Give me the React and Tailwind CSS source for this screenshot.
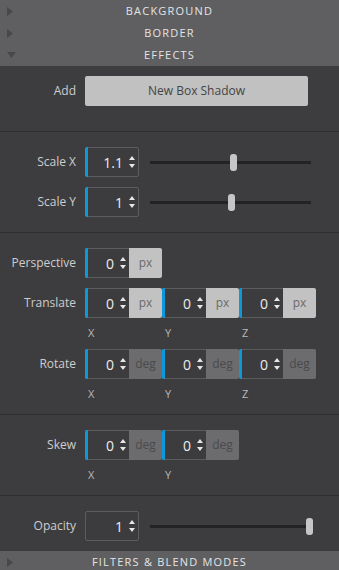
import React from 'react';

const font = { fontFamily: '"Open Sans", "Liberation Sans", sans-serif' };

function Header({ title, open }) {
  return (
    <div className="relative shrink-0 h-[22px] bg-[#5f5f61] flex items-center justify-center">
      <div className="absolute left-[7px] top-0 h-full flex items-center">
        {open ? (
          <svg width="9" height="6" viewBox="0 0 9 6"><path d="M0 0 L9 0 L4.5 6 Z" fill="#48484a" /></svg>
        ) : (
          <svg width="6" height="9" viewBox="0 0 6 9"><path d="M0 0 L6 4.5 L0 9 Z" fill="#48484a" /></svg>
        )}
      </div>
      <span className="text-[11px] tracking-[1.2px] text-[#e4e4e4] uppercase">{title}</span>
    </div>
  );
}

function Spin() {
  return (
    <div className="flex flex-col items-center gap-[4px]">
      <svg width="6" height="4" viewBox="0 0 6 4"><path d="M0 4 L3 0 L6 4 Z" fill="#e6e6e6" /></svg>
      <svg width="6" height="4" viewBox="0 0 6 4"><path d="M0 0 L6 0 L3 4 Z" fill="#e6e6e6" /></svg>
    </div>
  );
}

function NumBox({ value, w, bar = true, unit }) {
  return (
    <div className={`h-[30px] ${w} shrink-0 relative flex items-center justify-end pr-[3px] border border-[#5c5c5e] ${unit ? 'rounded-l-[2px] border-r-0' : 'rounded-[2px]'} bg-[#3c3c3e]`}>
      {bar && <div className="absolute left-[-1px] top-[-1px] bottom-[-1px] w-[3px] bg-[#0d98dc] rounded-l-[2px]" />}
      <span className="text-[14px] text-[#ececec] mr-[6px]">{value}</span>
      <Spin />
    </div>
  );
}

function Unit({ text, dark }) {
  return (
    <div className={`h-[30px] w-[33px] shrink-0 flex items-center justify-center text-[12px] rounded-r-[2px] ${dark ? 'bg-[#6c6c6e] text-[#4a4a4c]' : 'bg-[#c2c2c2] text-[#6a6a6a]'}`}>
      {text}
    </div>
  );
}

function Group({ unit, dark }) {
  return (
    <div className="flex shrink-0">
      <NumBox value="0" w="w-[44px]" unit />
      <Unit text={unit} dark={dark} />
    </div>
  );
}

function Row({ label, children }) {
  return (
    <div className="flex items-center h-[30px] shrink-0">
      <div className="w-[76px] shrink-0 text-right text-[12px] text-[#cdcdcd] mr-[9px]">{label}</div>
      {children}
    </div>
  );
}

function Axis({ labels }) {
  return (
    <div className="flex h-[31px] shrink-0 items-center pl-[88px] text-[11px] text-[#b8b8b8]">
      {labels.map((l) => (
        <div key={l} className="w-[77px]">{l}</div>
      ))}
    </div>
  );
}

function Slider({ pos }) {
  return (
    <div className="ml-[11px] w-[161px] shrink-0 h-[30px] relative">
      <div className="absolute left-0 right-0 top-[14px] h-[3px] bg-[#232325]" />
      <div className="absolute top-[7px] w-[7px] h-[17px] rounded-[3px] bg-[#c6c6c6]" style={{ left: pos }} />
    </div>
  );
}

function Divider() {
  return <div className="h-px shrink-0 bg-[#2d2d2f]" />;
}

export default function App() {
  return (
    <div className="w-[339px] h-[570px] bg-[#3d3d3f] flex flex-col overflow-hidden" style={font}>
      <Header title="Background" />
      <Header title="Border" />
      <Header title="Effects" open />

      <div className="pt-[10px] pb-[25px] shrink-0">
        <Row label="Add">
          <button className="w-[223px] h-[30px] shrink-0 bg-[#c1c1c1] rounded-[2px] text-[12px] text-[#444]">New Box Shadow</button>
        </Row>
      </div>
      <Divider />

      <div className="pt-[15px] pb-[15px] shrink-0 flex flex-col gap-[10px]">
        <Row label="Scale X">
          <NumBox value="1.1" w="w-[54px]" />
          <Slider pos="80px" />
        </Row>
        <Row label="Scale Y">
          <NumBox value="1" w="w-[54px]" />
          <Slider pos="78px" />
        </Row>
      </div>
      <Divider />

      <div className="pt-[15px] pb-[4px] shrink-0 flex flex-col">
        <Row label="Perspective">
          <Group unit="px" />
        </Row>
        <div className="h-[10px] shrink-0" />
        <Row label="Translate">
          <Group unit="px" />
          <Group unit="px" />
          <Group unit="px" />
        </Row>
        <Axis labels={['X', 'Y', 'Z']} />
        <Row label="Rotate">
          <Group unit="deg" dark />
          <Group unit="deg" dark />
          <Group unit="deg" dark />
        </Row>
        <Axis labels={['X', 'Y', 'Z']} />
      </div>
      <Divider />

      <div className="pt-[15px] pb-[4px] shrink-0 flex flex-col">
        <Row label="Skew">
          <Group unit="deg" dark />
          <Group unit="deg" dark />
        </Row>
        <Axis labels={['X', 'Y']} />
      </div>
      <Divider />

      <div className="pt-[15px] pb-[10px] shrink-0">
        <Row label="Opacity">
          <NumBox value="1" w="w-[54px]" bar={false} />
          <Slider pos="156px" />
        </Row>
      </div>

      <Header title="Filters & Blend Modes" />
    </div>
  );
}
